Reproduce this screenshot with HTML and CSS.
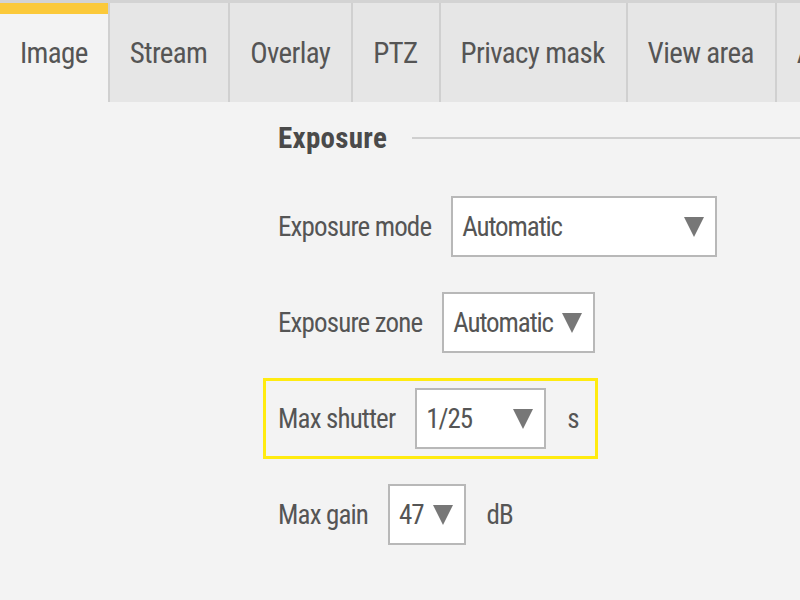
FILE: index.html
```html
<!DOCTYPE html>
<html lang="en">
<head>
    <meta charset="UTF-8">
    <meta name="viewport" content="width=device-width, initial-scale=1.0">
    <title>Image settings</title>
    <link rel="stylesheet" href="styles.css">
</head>
<body>
    <!-- Abas de configuração -->
    <nav class="tabs">
        <div class="tab active">Image</div>
        <div class="tab">Stream</div>
        <div class="tab">Overlay</div>
        <div class="tab">PTZ</div>
        <div class="tab">Privacy mask</div>
        <div class="tab">View area</div>
        <div class="tab">Audio</div>
    </nav>

    <div class="content">
        <div class="section-title">
            <h2>Exposure</h2>
            <span class="rule"></span>
        </div>

        <div class="row">
            <label>Exposure mode</label>
            <div class="select select-wide"><span>Automatic</span><i class="arrow"></i></div>
        </div>

        <div class="row">
            <label>Exposure zone</label>
            <div class="select"><span>Automatic</span><i class="arrow"></i></div>
        </div>

        <div class="row highlight">
            <label>Max shutter</label>
            <div class="select select-mid"><span>1/25</span><i class="arrow"></i></div>
            <span class="unit">s</span>
        </div>

        <div class="row">
            <label>Max gain</label>
            <div class="select"><span>47</span><i class="arrow"></i></div>
            <span class="unit">dB</span>
        </div>
    </div>
</body>
</html>
```

FILE: styles.css
```css
/* Layout principal */
body {
    margin: 0;
    background-color: #f3f3f3;
    color: #555;
    font-family: "Roboto Condensed", "Liberation Sans Narrow", "DejaVu Sans Condensed", sans-serif;
    letter-spacing: -0.85px;
    overflow: hidden;
}

/* Abas */
.tabs {
    display: flex;
    border-top: 3px solid #d3d3d3;
    white-space: nowrap;
    overflow: hidden;
}
.tab {
    flex: none;
    height: 99px;
    display: flex;
    align-items: center;
    padding: 0 21px 0 20px;
    background-color: #e6e6e6;
    border-right: 2px solid #d0d0d0;
    font-size: 29px;
    letter-spacing: -0.65px;
    color: #555;
}
.tab.active {
    background-color: #f3f3f3;
    box-shadow: inset 0 11px 0 #fbc93a;
    padding: 0 20px;
}

/* Conteúdo */
.content {
    padding-left: 263px;
}
.section-title {
    display: flex;
    align-items: center;
    height: 72px;
    padding-left: 15px;
    margin-bottom: 12px;
}
.section-title h2 {
    margin: 0;
    font-size: 29px;
    font-weight: bold;
    letter-spacing: 0.3px;
    color: #4a4a4a;
}
.section-title .rule {
    flex: 1;
    height: 2px;
    margin-left: 25px;
    background-color: #cfcfcf;
}

/* Linhas do formulário */
.row {
    display: flex;
    width: max-content;
    align-items: center;
    gap: 20px;
    padding: 7px 16px 7px 12px;
    border: 3px solid transparent;
    margin-bottom: 15px;
    font-size: 27px;
}
.row.highlight {
    border-color: #ffeb10;
}
.unit {
    margin-left: 1px;
}

/* Campos de seleção */
.select {
    box-sizing: border-box;
    height: 61px;
    display: flex;
    align-items: center;
    justify-content: space-between;
    gap: 9px;
    padding: 0 11px 0 9px;
    background-color: white;
    border: 2px solid #b8b8b8;
    color: #555;
    letter-spacing: -1.1px;
}
.select-wide {
    width: 266px;
}
.select-mid {
    width: 131px;
}
.arrow {
    width: 0;
    height: 0;
    border-left: 10px solid transparent;
    border-right: 10px solid transparent;
    border-top: 20px solid #777;
}
```
